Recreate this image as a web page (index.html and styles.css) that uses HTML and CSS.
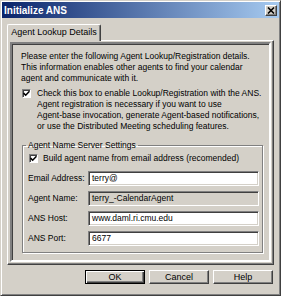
FILE: index.html
```html
<!DOCTYPE html>
<html lang="en">
<head>
  <meta charset="UTF-8">
  <title>Initialize ANS</title>
  <link rel="stylesheet" href="styles.css">
</head>
<body>
  <div class="window">
    <!-- Barra de titulo -->
    <div class="titlebar">
      <span class="title">Initialize ANS</span>
      <span class="close">
        <svg width="8" height="7" viewBox="0 0 8 7"><path d="M1 0.5 L7 6.5 M7 0.5 L1 6.5" stroke="#000" stroke-width="1.6"/></svg>
      </span>
    </div>

    <div class="content">
      <div class="tabs">
        <div class="tab">Agent Lookup Details</div>
      </div>

      <div class="panel">
        <div class="frame">
          <p class="intro">Please enter the following Agent Lookup/Registration details.<br>This information enables other agents to find your calendar<br>agent and communicate with it.</p>

          <div class="check main-check">
            <span class="box"><svg width="7" height="7" viewBox="0 0 7 7"><path d="M0.5 3 L2.7 5.2 L6.5 1.2" fill="none" stroke="#000" stroke-width="1.6"/></svg></span>
            <span>Check this box to enable Lookup/Registration with the ANS.<br>Agent registration is necessary if you want to use<br>Agent-base invocation, generate Agent-based notifications,<br>or use the Distributed Meeting scheduling features.</span>
          </div>

          <fieldset class="group">
            <legend>Agent Name Server Settings</legend>
            <div class="check build-check">
              <span class="box"><svg width="7" height="7" viewBox="0 0 7 7"><path d="M0.5 3 L2.7 5.2 L6.5 1.2" fill="none" stroke="#000" stroke-width="1.6"/></svg></span>
              <span>Build agent name from email address (recomended)</span>
            </div>
            <div class="field"><span class="label">Email Address:</span><div class="input">terry@</div></div>
            <div class="field"><span class="label">Agent Name:</span><div class="input disabled">terry_-CalendarAgent</div></div>
            <div class="field"><span class="label">ANS Host:</span><div class="input">www.daml.ri.cmu.edu</div></div>
            <div class="field"><span class="label">ANS Port:</span><div class="input">6677</div></div>
          </fieldset>
        </div>
      </div>

      <div class="buttons">
        <button class="default">OK</button>
        <button>Cancel</button>
        <button>Help</button>
      </div>
    </div>
  </div>
</body>
</html>
```

FILE: styles.css
```css
body {
  margin: 0;
  font-family: "Liberation Sans", Arial, sans-serif;
  font-size: 8.5px;
  line-height: 11px;
  color: #000;
  background: #d4d0c8;
}
/* Ventana con borde 3D */
.window {
  width: 281px;
  height: 296px;
  box-sizing: border-box;
  border: 1px solid;
  border-color: #d4d0c8 #404040 #404040 #d4d0c8;
  box-shadow: inset 1px 1px #fff, inset -1px -1px #808080;
  padding: 1px;
}
.titlebar {
  height: 16px;
  background: linear-gradient(to right, #0a246a, #a6caf0);
  display: flex;
  align-items: center;
  justify-content: space-between;
  padding: 0 2px 0 2px;
}
.title {
  color: #fff;
  font-weight: bold;
  font-size: 10px;
}
.close {
  width: 12px;
  height: 11px;
  box-sizing: border-box;
  background: #d4d0c8;
  border: 1px solid;
  border-color: #fff #404040 #404040 #fff;
  box-shadow: inset -1px -1px #808080;
  display: flex;
  align-items: center;
  justify-content: center;
}
.content {
  padding: 6px 5px 0 5px;
}
/* Pestana */
.tabs {
  display: flex;
}
.tab {
  position: relative;
  z-index: 1;
  width: 94px;
  height: 17px;
  box-sizing: border-box;
  margin-bottom: -1px;
  text-align: center;
  line-height: 15px;
  font-size: 9px;
  background: #d4d0c8;
  border: 1px solid;
  border-bottom: none;
  border-color: #fff #404040 #fff #fff;
  border-radius: 2px 2px 0 0;
  box-shadow: inset -1px 0 #808080;
}
.panel {
  height: 225px;
  box-sizing: border-box;
  border: 1px solid;
  border-color: #fff #404040 #404040 #fff;
  box-shadow: inset -1px -1px #808080;
  padding: 1px 2px 2px 2px;
}
.frame {
  height: 100%;
  box-sizing: border-box;
  border: 2px solid;
  border-color: #808080 #fff #fff #808080;
  box-shadow: inset 1px 1px #404040;
  padding: 7px 6px 0 9px;
}
.intro {
  margin: 0;
  white-space: nowrap;
}
/* Casillas */
.check {
  display: flex;
  white-space: nowrap;
}
.box {
  width: 9px;
  height: 9px;
  flex: none;
  box-sizing: border-box;
  background: #fff;
  border: 1px solid;
  border-color: #808080 #fff #fff #808080;
  box-shadow: inset 1px 1px #404040;
  display: flex;
  align-items: center;
  justify-content: center;
  margin-top: 1px;
}
.main-check {
  margin-top: 4px;
  gap: 6px;
  padding-left: 1px;
}
.build-check {
  margin-top: 2px;
  gap: 5px;
  padding-left: 1px;
}
/* Grupo de ajustes */
.group {
  margin: 8px 0 0 1px;
  padding: 0 3px 6px 5px;
  border: 1px solid #808080;
  box-shadow: inset 1px 1px #fff, 1px 1px #fff;
}
.group legend {
  padding: 0 2px;
  margin-left: -2px;
}
.field {
  display: flex;
  align-items: center;
  height: 15px;
  margin-top: 5px;
}
.build-check + .field {
  margin-top: 7px;
}
.label {
  width: 60px;
  flex: none;
  white-space: nowrap;
}
.input {
  flex: 1;
  height: 15px;
  box-sizing: border-box;
  background: #fff;
  border: 1px solid;
  border-color: #808080 #fff #fff #808080;
  box-shadow: inset 1px 1px #404040, inset -1px -1px #d4d0c8;
  padding: 1px 0 0 3px;
  line-height: 11px;
}
.input.disabled {
  background: #d4d0c8;
}
/* Botones */
.buttons {
  display: flex;
  justify-content: flex-end;
  gap: 4px;
  margin-top: 5px;
  padding-right: 1px;
}
button {
  width: 60px;
  height: 14px;
  padding: 0;
  font: inherit;
  font-size: 9px;
  color: #000;
  background: #d4d0c8;
  border: 1px solid;
  border-color: #fff #404040 #404040 #fff;
  box-shadow: inset -1px -1px #808080;
}
button.default {
  border-color: #000;
  box-shadow: inset 1px 1px #fff, inset -1px -1px #404040, inset -2px -2px #808080;
}
```
